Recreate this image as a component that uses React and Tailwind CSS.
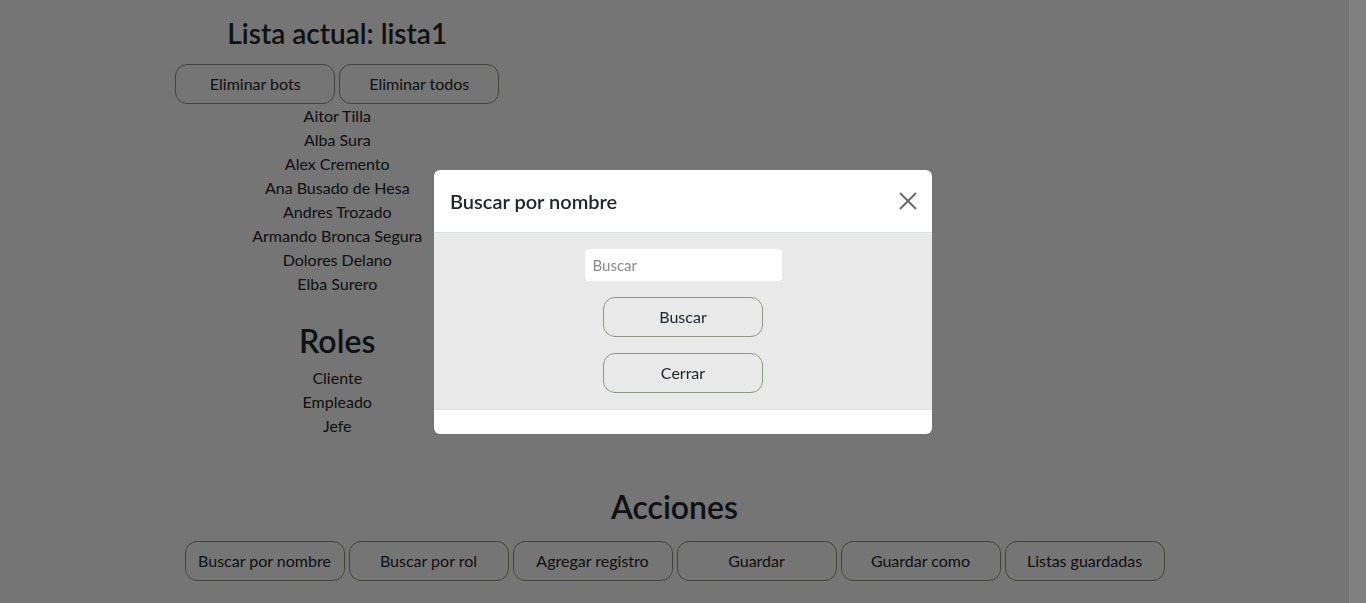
import React from "react";

const nombres = [
  "Aitor Tilla",
  "Alba Sura",
  "Alex Cremento",
  "Ana Busado de Hesa",
  "Andres Trozado",
  "Armando Bronca Segura",
  "Dolores Delano",
  "Elba Surero",
];
const roles = ["Cliente", "Empleado", "Jefe"];
const acciones = [
  "Buscar por nombre",
  "Buscar por rol",
  "Agregar registro",
  "Guardar",
  "Guardar como",
  "Listas guardadas",
];

function Btn({ children }) {
  return (
    <button className="w-[160px] h-[40px] rounded-[12px] border border-[#8e9486] bg-transparent text-[16px] text-[#212529]">
      {children}
    </button>
  );
}

export default function App() {
  return (
    <div
      className="flex h-[603px] w-full overflow-hidden bg-white text-[#212529]"
      style={{ fontFamily: "Lato, 'Noto Sans', sans-serif" }}
    >
      <div className="flex-1 flex flex-col">
        <div className="grid grid-cols-2">
          <div className="flex flex-col items-center pt-[16px]">
            <h2 className="text-[28px] leading-[34px] font-semibold">Lista actual: lista1</h2>
            <div className="flex gap-[4px] mt-[14px]">
              <Btn>Eliminar bots</Btn>
              <Btn>Eliminar todos</Btn>
            </div>
            <ul className="flex flex-col items-center text-[16px] leading-[24px]">
              {nombres.map((n) => (
                <li key={n}>{n}</li>
              ))}
            </ul>
            <h2 className="text-[32px] leading-[38px] font-semibold mt-[26px] mb-[6px]">Roles</h2>
            <ul className="flex flex-col items-center text-[16px] leading-[24px]">
              {roles.map((n) => (
                <li key={n}>{n}</li>
              ))}
            </ul>
          </div>
          <div />
        </div>
        <div className="flex flex-col items-center mt-[50px]">
          <h2 className="text-[32px] leading-[38px] font-semibold">Acciones</h2>
          <div className="flex gap-[4px] mt-[15px]">
            {acciones.map((a) => (
              <Btn key={a}>{a}</Btn>
            ))}
          </div>
        </div>
      </div>
      <div className="w-[17px] shrink-0 bg-[#808080] relative z-20" />

      <div className="fixed top-0 left-0 bottom-0 right-[17px] bg-[rgba(0,0,0,0.54)] z-10" />
      <div className="fixed inset-0 z-30 flex items-center justify-center">
        <div className="w-[498px] rounded-[6px] bg-white overflow-hidden" style={{ fontFamily: "Lato, 'Noto Sans', sans-serif" }}>
          <div className="h-[63px] flex items-center justify-between pl-[16px] pr-[16px] border-b border-[#dee2e6]">
            <h5 className="text-[20px] font-semibold text-[#212529]">Buscar por nombre</h5>
            <svg width="18" height="18" viewBox="0 0 18 18" className="mr-[-1px]">
              <path d="M1 1 L17 17 M17 1 L1 17" stroke="#6b6b6b" strokeWidth="2" fill="none" />
            </svg>
          </div>
          <div className="bg-[#e9e9e9] flex flex-col items-center pt-[16px] pb-[16px]">
            <input
              placeholder="Buscar"
              className="w-[197px] h-[32px] rounded-[4px] bg-white px-[8px] text-[15px] placeholder:text-[#8a8a8a] outline-none"
            />
            <div className="mt-[16px] flex flex-col gap-[16px]">
              <Btn>Buscar</Btn>
              <Btn>Cerrar</Btn>
            </div>
          </div>
          <div className="h-[25px] border-t border-[#dee2e6]" />
        </div>
      </div>
    </div>
  );
}
